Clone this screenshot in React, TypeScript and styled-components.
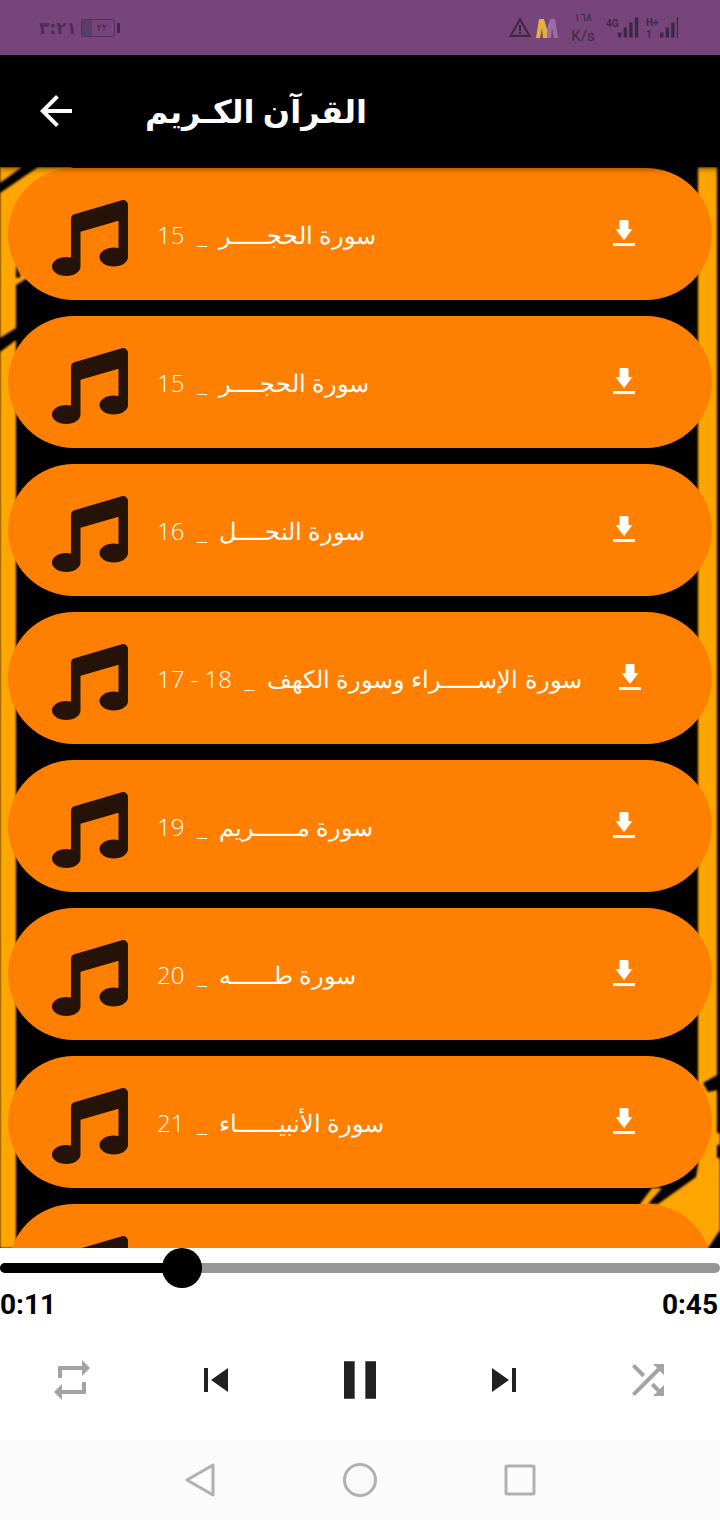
import React, { type ReactElement } from 'react'
import { styled, createGlobalStyle } from 'styled-components'
import { FaMusic } from 'react-icons/fa'
import { MdArrowBack, MdPause, MdRepeat, MdShuffle, MdSkipNext, MdSkipPrevious } from 'react-icons/md'

const Global = createGlobalStyle`
  html, body {
    margin: 0;
    padding: 0;
    background: #fff;
  }
`

const Screen = styled.div`
  width: 720px;
  height: 1520px;
  display: flex;
  flex-direction: column;
  overflow: hidden;
  font-family: "Open Sans", "DejaVu Sans", sans-serif;
`

const StatusBar = styled.div`
  height: 55px;
  flex: none;
  background: #77457a;
  color: #3d2748;
  display: flex;
  align-items: center;
  justify-content: space-between;
  padding: 0 42px 0 39px;
`

const StatusGroup = styled.div`
  display: flex;
  align-items: center;
`

const Clock = styled.span`
  font-family: "DejaVu Sans", sans-serif;
  font-size: 17px;
  font-weight: 700;
  width: 42px;
  opacity: 0.75;
`

const Battery = styled.div`
  width: 34px;
  height: 18px;
  box-sizing: border-box;
  border: 1.5px solid #4e2f5c;
  border-radius: 3px;
  display: flex;
  align-items: center;
  justify-content: center;
  padding-left: 8px;
  font-family: "DejaVu Sans", sans-serif;
  font-size: 10px;
  background: linear-gradient(90deg, #5a4068 0 10px, transparent 10px);
  position: relative;

  &::after {
    content: '';
    position: absolute;
    right: -6px;
    top: 3px;
    width: 3px;
    height: 10px;
    background: #3d2748;
  }
`

const Speed = styled.div`
  width: 38px;
  margin-left: 3px;
  display: flex;
  flex-direction: column;
  align-items: center;
  font-family: Roboto, "DejaVu Sans", sans-serif;
  line-height: 1;

  > span:first-child {
    font-family: "DejaVu Sans", sans-serif;
    font-size: 11px;
    margin-bottom: 6px;
  }

  > span:last-child {
    font-size: 15px;
  }
`

const AppBar = styled.header`
  height: 112px;
  flex: none;
  background: #000;
  display: flex;
  align-items: center;
  padding-left: 32px;
  color: #fff;
  position: relative;
  z-index: 2;
  box-shadow: 0 3px 5px rgba(0, 0, 0, 0.35);
`

const Title = styled.h1`
  margin: -2px 0 0 65px;
  font-size: 32px;
  font-weight: 700;
  font-family: "Open Sans", "DejaVu Sans", sans-serif;
`

const ListArea = styled.div`
  flex: 1;
  min-height: 0;
  position: relative;
  overflow: hidden;
  background: #000;
  padding: 1px 8px 0;
  display: flex;
  flex-direction: column;
  gap: 16px;
`

const Backdrop = styled.svg`
  position: absolute;
  inset: 0;
  width: 100%;
  height: 100%;
  filter: blur(0.8px);
`

const Row = styled.div`
  height: 132px;
  flex: none;
  border-radius: 66px;
  background: #ff8000;
  display: flex;
  align-items: center;
  padding-left: 44px;
  position: relative;
  color: #fff;
`

const Note = styled(FaMusic)`
  width: 76px;
  height: 76px;
  flex: none;
  color: #241306;
  position: relative;
  top: 4px;
`

const RowTitle = styled.span`
  margin-left: 29px;
  font-size: 24px;
  font-weight: 300;
  white-space: pre;
`

const Download = styled.svg<{ $right: number }>`
  width: 22px;
  height: 26px;
  flex: none;
  margin-left: auto;
  margin-right: ${(props) => props.$right}px;
  position: relative;
  top: -1px;
`

const Player = styled.div`
  height: 192px;
  flex: none;
  background: #fff;
  display: flex;
  flex-direction: column;
`

const Slider = styled.div`
  height: 40px;
  flex: none;
  display: flex;
  align-items: center;
  position: relative;
`

const TrackLine = styled.div`
  width: 100%;
  height: 10px;
  border-radius: 5px;
  background: #969696;
  overflow: hidden;
`

const Fill = styled.div`
  height: 100%;
  background: #000;
`

const Thumb = styled.div`
  position: absolute;
  top: 0;
  width: 40px;
  height: 40px;
  margin-left: -20px;
  border-radius: 50%;
  background: #000;
`

const Times = styled.div`
  height: 32px;
  flex: none;
  display: flex;
  align-items: center;
  justify-content: space-between;
  padding-right: 2px;
  font-family: Roboto, sans-serif;
  font-size: 28px;
  font-weight: 700;
  color: #000;
`

const Controls = styled.div`
  flex: 1;
  display: grid;
  grid-template-columns: repeat(5, 144px);
  align-items: center;
  justify-items: center;
`

const Control = styled.span<{ $muted?: boolean }>`
  display: flex;
  color: ${(props) => (props.$muted ? '#a3a3a3' : '#212121')};
`

const NavBar = styled.div`
  height: 80px;
  flex: none;
  background: #fbfbfb;
  display: flex;
  align-items: center;
  justify-content: center;
  gap: 112px;
`

const NavIcon = styled.svg`
  width: 48px;
  height: 48px;
  fill: none;
  stroke: #b0b0b0;
  stroke-width: 3;
  stroke-linejoin: round;
`

interface Track {
  title: string;
  number: string;
  downloadRight?: number;
}

const kashida = (count: number): string => 'ـ'.repeat(count)

const tracks: Track[] = [
  { title: `سورة الحجـ${kashida(4)}ر`, number: '15' },
  { title: `سورة الحجـ${kashida(3)}ر`, number: '15' },
  { title: `سورة النحـ${kashida(3)}ل`, number: '16' },
  { title: `سورة الإسـ${kashida(4)}راء وسورة الكهف`, number: '18 - 17', downloadRight: 71 },
  { title: `سورة مـ${kashida(5)}ريم`, number: '19' },
  { title: `سورة طـ${kashida(5)}ه`, number: '20' },
  { title: `سورة الأنبيـ${kashida(5)}اء`, number: '21' },
  { title: '', number: '' },
]

const progress = 182 / 720

const DownloadIcon = ({ right }: { right: number }): ReactElement => (
  <Download $right={right} viewBox="0 0 22 26" fill="#fff">
    <path d="M6.5 1q0-1 1-1h7q1 0 1 1v8h4l-8.5 11-8.5-11h4z" />
    <rect x="0" y="23" width="22" height="3" />
  </Download>
)

const Bars = ({ x }: { x: number }): ReactElement => (
  <g fill="#3d2748">
    {[0, 1, 2, 3].map((i) => (
      <rect key={i} x={x + i * 5.6} y={27.5 - (i + 1) * 5} width="3.4" height={(i + 1) * 5} />
    ))}
  </g>
)

export default function App(): ReactElement {
  return (
    <Screen>
      <Global />
      <StatusBar>
        <StatusGroup>
          <Clock>٣:٢١</Clock>
          <Battery>٢٢</Battery>
        </StatusGroup>
        <StatusGroup>
          <svg width="52" height="24" viewBox="0 0 52 24">
            <path d="M11 3 20.5 20H1.5z" fill="none" stroke="#3d2748" strokeWidth="2" />
            <path d="M10 9h2v6h-2zM10 16h2v2h-2z" fill="#3d2748" />
            <path d="M27 22 30 3h5l3 10v9h-4l-1-10-2 10z" fill="#e0b040" />
            <path d="M38 13 41 3h5l3 19h-4l-2-10-1 10h-4z" fill="#9a6da8" />
          </svg>
          <Speed>
            <span>١٦٨</span>
            <span>K/s</span>
          </Speed>
          <svg width="76" height="36" viewBox="0 0 76 36">
            <text x="4" y="16.5" fontFamily="Roboto" fontSize="10" fontWeight="700" fill="#3d2748">4G</text>
            <Bars x={16} />
            <text x="44" y="15.5" fontFamily="Roboto" fontSize="10" fontWeight="700" fill="#3d2748">H+</text>
            <text x="44" y="27.5" fontFamily="Roboto" fontSize="10" fontWeight="700" fill="#3d2748">1</text>
            <Bars x={58} />
          </svg>
        </StatusGroup>
      </StatusBar>

      <AppBar>
        <MdArrowBack size={48} />
        <Title dir="rtl">القرآن الكـريم</Title>
      </AppBar>

      <ListArea>
        <Backdrop viewBox="0 0 720 1081" preserveAspectRatio="none">
          <path d="M0 0h22L0 16z" fill="#ffa500" />
          <path d="M0 26 38 0H72V90L60 110 27 111 16 118V1081H0z" fill="#ffa500" />
          <path d="M16 98 21 110 16 111z" fill="#000" />
          <path d="M0 171 16 161V173L0 185z" fill="#000" />
          <path d="M698 0H717V966H720V978H717V991H720V1063L708 1081H640V1037H658L696 1010 698 998z" fill="#ffa500" />
          <path d="M703 916 717 908V923L708 925z" fill="#000" />
          <path d="M640 1037H648L662 1021H652z" fill="#ffa500" />
        </Backdrop>
        {tracks.map((track, index) => (
          <Row key={index}>
            <Note />
            {track.title !== '' && <RowTitle dir="rtl">{`${track.title}  _  ${track.number}`}</RowTitle>}
            {track.title !== '' && <DownloadIcon right={track.downloadRight ?? 77} />}
          </Row>
        ))}
      </ListArea>

      <Player>
        <Slider>
          <TrackLine>
            <Fill style={{ width: `${progress * 100}%` }} />
          </TrackLine>
          <Thumb style={{ left: `${progress * 100}%` }} />
        </Slider>
        <Times>
          <span>0:11</span>
          <span>0:45</span>
        </Times>
        <Controls>
          <Control $muted><MdRepeat size={48} /></Control>
          <Control><MdSkipPrevious size={48} /></Control>
          <Control><MdPause size={64} /></Control>
          <Control><MdSkipNext size={48} /></Control>
          <Control $muted><MdShuffle size={48} /></Control>
        </Controls>
      </Player>

      <NavBar>
        <NavIcon viewBox="0 0 48 48">
          <path d="M37 9v30L11 24z" />
        </NavIcon>
        <NavIcon viewBox="0 0 48 48">
          <circle cx="24" cy="24" r="15.5" />
        </NavIcon>
        <NavIcon viewBox="0 0 48 48">
          <rect x="10" y="10" width="28" height="28" rx="1" />
        </NavIcon>
      </NavBar>
    </Screen>
  )
}
